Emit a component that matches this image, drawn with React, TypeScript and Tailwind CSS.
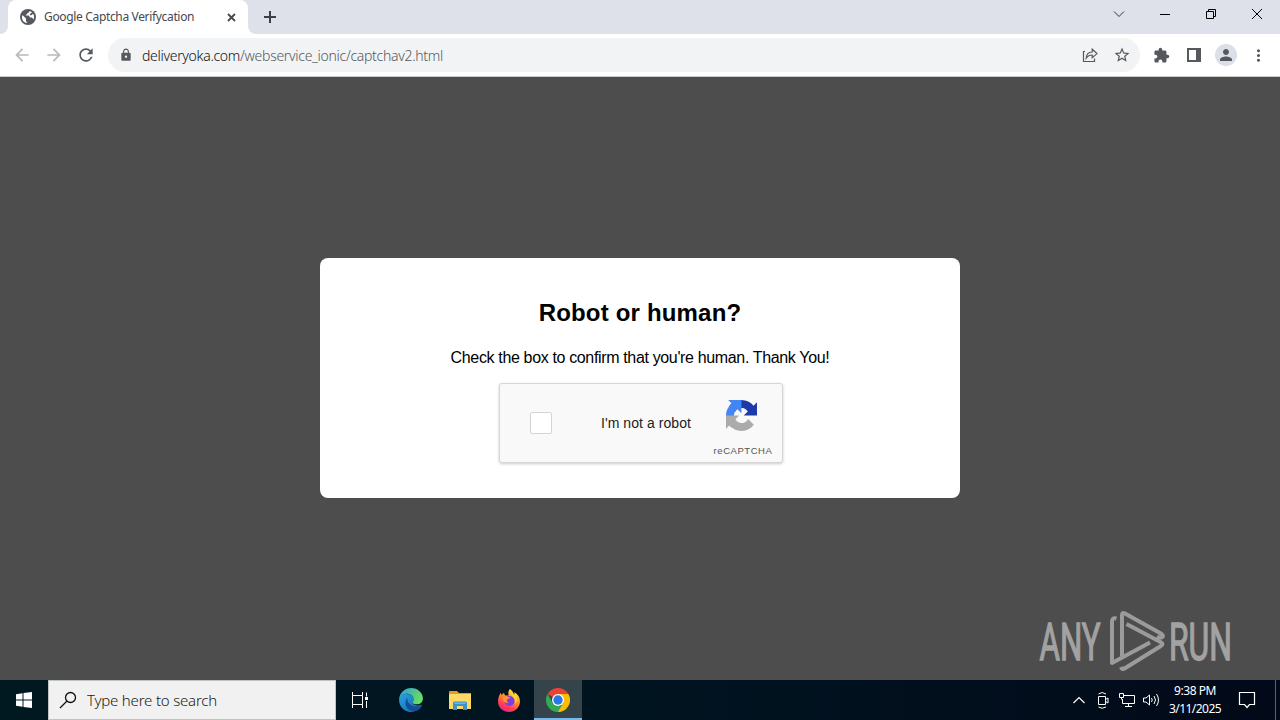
import React from 'react';
import {
  MdArrowBack,
  MdArrowForward,
  MdExtension,
  MdLock,
  MdMoreVert,
  MdPerson,
  MdPublic,
  MdRefresh,
  MdStarBorder,
} from 'react-icons/md';

const TabStrip: React.FC = () => (
  <div className="flex h-[34px] bg-[#dee1e9] text-[#202124]">
    <div className="w-2 bg-white">
      <div className="h-full rounded-br-lg bg-[#dee1e9]" />
    </div>
    <div className="flex h-full w-60 items-center rounded-t-lg bg-white pl-3 pr-2.5">
      <div className="flex size-4 items-center justify-center rounded-full bg-[#55595e]">
        <svg className="size-4" viewBox="0 0 16 16" fill="#fff">
          <path d="M3 6.500 6 9.500v2.500L7.500 14C4 14 1.800 11 2 8c0-.6.1-1 .3-1.500zM9.500 2c0 2-2 1.500-2.500 3L5.500 6.500H9l1 2h2l1.500 2c.8-2 .8-4-.3-5.800L11 6.500 9.500 5.500 12 3.200C11.300 2.600 10.400 2.200 9.500 2z" />
        </svg>
      </div>
      <span className="ml-2 w-[183px] whitespace-nowrap text-[12px] tracking-[-0.34px] text-[#45494d]">
        Google Captcha Verifycation
      </span>
      <svg className="size-[9px] shrink-0" viewBox="0 0 9 9" fill="none" stroke="#45494d" strokeWidth="1.800">
        <path d="m1 1 7 7M8 1 1 8" />
      </svg>
    </div>
    <div className="w-2 bg-white">
      <div className="h-full rounded-bl-lg bg-[#dee1e9]" />
    </div>
    <svg className="ml-[7px] mt-2.5 size-[14px]" viewBox="0 0 14 14" fill="none" stroke="#3c4043" strokeWidth="2">
      <path d="M7 1v12M1 7h12" />
    </svg>
    <div className="ml-auto flex">
      <svg className="h-[28px] w-[46px]" viewBox="0 0 46 28" fill="none" stroke="#303238">
        <path d="m18 11.500 5 5 5-5" />
      </svg>
      <svg className="h-[28px] w-[46px]" viewBox="0 0 46 28" fill="none" stroke="#000">
        <path d="M18 14.500h10" />
      </svg>
      <svg className="h-[28px] w-[46px]" viewBox="0 0 46 28" fill="none" stroke="#000">
        <path d="M18.500 11.500h7v7h-7zM20.500 11.500v-2h7v7h-2" />
      </svg>
      <svg className="h-[28px] w-[46px]" viewBox="0 0 46 28" fill="none" stroke="#000">
        <path d="m18 9 10 10M28 9 18 19" />
      </svg>
    </div>
  </div>
);

const Toolbar: React.FC = () => (
  <div className="flex h-[43px] items-center border-b border-[#c9c9c9] bg-white pl-3 pr-3 text-[#55595e]">
    <MdArrowBack className="size-5 text-[#b7b9bb]" />
    <MdArrowForward className="ml-3 size-5 text-[#b7b9bb]" />
    <MdRefresh className="ml-3 size-5" />
    <div className="ml-3 flex h-[34px] w-[1032px] items-center rounded-full bg-[#f1f3f5] pl-[11px] pr-[9px]">
      <MdLock className="size-3.5" />
      <span className="ml-[9px] whitespace-nowrap text-[14px] font-light tracking-[-0.3px] text-[#55595d]">
        <span className="text-[#101114]">deliveryoka.com</span>/webservice_ionic/captchav2.html
      </span>
      <svg className="ml-auto size-4" viewBox="0 0 16 16" fill="none" stroke="currentColor" strokeWidth="1.200">
        <path d="M3 4.500H1.500v10h11v-3" />
        <path d="M4.200 11.200c.2-4 2.300-6.100 6-6.200V2.200l4.800 4.400-4.800 4.200V8c-2.700 0-4.500.9-6 3.200Z" />
      </svg>
      <MdStarBorder className="ml-[15px] size-[18px]" />
    </div>
    <MdExtension className="ml-[13px] size-[17px]" />
    <svg className="ml-4 size-4" viewBox="0 0 16 16">
      <path fill="currentColor" fillRule="evenodd" d="M1 1h14v14H1zM3 3v10h7V3z" />
    </svg>
    <div className="ml-[13px] flex size-[22px] items-center justify-center rounded-full bg-[#dcdee8]">
      <MdPerson className="size-[18px]" />
    </div>
    <MdMoreVert className="ml-3 size-[19px]" />
  </div>
);

const RecaptchaLogo: React.FC = () => (
  <svg className="size-[31px]" viewBox="0 0 64 64">
    <path
      fill="#1c3aa9"
      d="M64 31.955l-.033-1.37V4.687l-7.16 7.16C50.948 4.674 42.033.093 32.05.093c-10.4 0-19.622 4.96-25.458 12.64l11.736 11.86a15.55 15.55 0 0 1 4.754-5.334c2.05-1.6 4.952-2.906 8.968-2.906.485 0 .86.057 1.135.163 4.976.393 9.288 3.14 11.828 7.124l-8.307 8.307L64 31.953"
    />
    <path
      fill="#4285f4"
      d="M31.862.094l-1.37.033H4.594l7.16 7.16C4.58 13.147 0 22.06 0 32.046c0 10.4 4.96 19.622 12.64 25.458L24.5 45.768a15.55 15.55 0 0 1-5.334-4.754c-1.6-2.05-2.906-4.952-2.906-8.968 0-.485.057-.86.163-1.135.393-4.976 3.14-9.288 7.124-11.828l8.307 8.307L31.86.095"
    />
    <path
      fill="#ababab"
      d="M.001 32.045l.033 1.37v25.898l7.16-7.16c5.86 7.173 14.774 11.754 24.76 11.754 10.4 0 19.622-4.96 25.458-12.64l-11.736-11.86a15.55 15.55 0 0 1-4.754 5.334c-2.05 1.6-4.952 2.906-8.968 2.906-.485 0-.86-.057-1.135-.163-4.976-.393-9.288-3.14-11.828-7.124l8.307-8.307c-10.522.04-22.4.066-27.295-.005"
    />
  </svg>
);

const CaptchaDialog: React.FC = () => (
  <div className="flex h-60 w-[640px] flex-col items-center rounded-lg bg-white pt-10 font-['Liberation_Sans',Arial,sans-serif] text-black">
    <h1 className="text-[24px] font-bold leading-[30px] tracking-[0.18px]">Robot or human?</h1>
    <p className="mt-[21px] text-[16px] leading-[18px] tracking-[-0.35px]">
      Check the box to confirm that you're human. Thank You!
    </p>
    <div className="ml-[2px] mt-4 flex h-[80px] w-[284px] rounded-[3px] border border-[#d6d6d6] bg-[#f9f9f9] shadow-[0_1px_3px_rgba(0,0,0,0.2)]">
      <button type="button" className="ml-[30px] mt-7 size-[22px] rounded-[2px] border border-[#d5d5d5] bg-white" />
      <span className="ml-[49px] w-[90px] self-center whitespace-nowrap pt-0.5 text-[14px] tracking-[0.06px] text-[#222]">
        I'm not a robot
      </span>
      <div className="ml-[22px] flex w-[60px] flex-col items-center pt-4">
        <div className="mr-1">
          <RecaptchaLogo />
        </div>
        <span className="mt-3 text-[9.5px] leading-4 tracking-[0.55px] text-[#555]">reCAPTCHA</span>
      </div>
    </div>
  </div>
);

const Watermark: React.FC = () => (
  <svg
    className="absolute bottom-2 right-12 h-[62px] w-[194px] font-['Roboto',sans-serif]"
    viewBox="0 0 194 62"
    fill="#a2a2a2"
  >
    <g stroke="#a2a2a2" strokeWidth="1.400">
      <text transform="translate(1.500 49.500) scale(.5 1)" fontSize="51" textLength="122" lengthAdjust="spacingAndGlyphs">
        ANY
      </text>
      <text transform="translate(131 49.500) scale(.5 1)" fontSize="51" textLength="126" lengthAdjust="spacingAndGlyphs">
        RUN
      </text>
    </g>
    <g fill="none" stroke="#9b9b9b" strokeWidth="4" strokeLinejoin="round">
      <path d="M78.500 8.500q-4.500-1.500-4.500 3.500V53l38-20.500" />
      <path d="M84 46V5q0-3 3-1.500l35 19.500q5 3 1.500 4.500-1.500.7-4.500-1" />
      <path d="m88.500 14 34 18q4 2 0 4.200L86.500 58.500q-2.500 1.500-3.500-1.500" />
    </g>
  </svg>
);

const EdgeIcon: React.FC = () => (
  <svg className="size-[26px]" viewBox="0 0 24 24">
    <defs>
      <linearGradient id="edgeTop" x1="0" y1="0" x2="1" y2=".4">
        <stop stopColor="#279de0" />
        <stop offset="1" stopColor="#68dc63" />
      </linearGradient>
      <linearGradient id="edgeBase" x1="0" y1="0" x2="1" y2="1">
        <stop stopColor="#28a1df" />
        <stop offset="1" stopColor="#1267b4" />
      </linearGradient>
    </defs>
    <path fill="url(#edgeBase)" d="M1 12C1 7 5 6.500 8 6.500c4.500 0 6.500 3 6.500 5.500 0 1-1 1.500-1 2.500 0 1.500 2.500 2.500 5 2.500 1.500 0 3-.6 3.500-.6C20.500 20 17 23 12 23 6 23 1 18.500 1 12Z" />
    <path fill="#154f93" d="M8.700 10C6.300 12 6.200 17 9 20c2.600 2.800 7.200 3 11 .2 1.200-1 2-2.500 2-3.700-2 1.500-5 2-7.500 1.200C10.500 16.300 8 13.500 8.700 10Z" />
    <path fill="url(#edgeTop)" d="M1.200 10.500C1.800 5 6.500 1 12 1c6.200 0 11 4.500 11 9.700 0 3.600-2.700 5.300-5.300 5.300-2.800 0-4.300-.8-4.300-1.700 0-.6 1-1.200 1-2.600C14.400 8.500 11.300 6.300 8 6.300c-3 0-5.500 1.500-6.800 4.200Z" />
  </svg>
);

const FolderIcon: React.FC = () => (
  <svg className="h-[19px] w-[22px]" viewBox="0 0 22 19">
    <path fill="#e89a20" d="M0 1q0-1 1-1h7l2 2h12v5H0z" />
    <path fill="#ffd866" d="M0 3h22v15H0z" />
    <path fill="#3c93cc" d="M4 19v-7q0-1.500 1.500-1.500h11q1.500 0 1.500 1.500v7h-4v-4H8v4z" />
    <path fill="#68b7e4" d="M5.500 11.500h11V13h-11z" />
  </svg>
);

const FirefoxIcon: React.FC = () => (
  <svg className="size-6" viewBox="0 0 24 24">
    <defs>
      <linearGradient id="fox" x1=".8" y1="0" x2=".3" y2="1">
        <stop stopColor="#fff44f" />
        <stop offset=".4" stopColor="#ff9a27" />
        <stop offset=".75" stopColor="#ff4055" />
        <stop offset="1" stopColor="#ed1d83" />
      </linearGradient>
    </defs>
    <path fill="url(#fox)" d="M13 1c2 1.500 3.500 3.500 4 5.500.5-.6.600-1.500.4-2.400C21 6.500 23 9.500 23 13.500 23 19.300 18 24 12 24S1 19.500 1 13.500C1 10 2 7 4 4.500c0 1 .2 1.700.6 2.500L7 4.800c.1 1.200.7 2 1.600 2.700 1.200-.2 2-.1 3 .3C11 5 11.300 2.500 13 1Z" />
    <circle cx="12.500" cy="13" r="5" fill="#7b3ee6" />
    <path fill="#ff942c" d="M5.500 9.500c2.500-1.700 5.700-1.200 8 .5-1.200.8-2.500.7-3.300 1.600-1 1.100.2 2.600 1.500 2.600-2 1.500-5 1-6.200-4.700Z" />
    <path fill="#ffd43b" d="M14 3c-.8 2.500.8 4.500 3 7 1.500 1.800 1.600 4 .7 6 3-2.600 3.600-6 1.300-9l-1.300-1-.3 2.500C16.800 6.500 15.500 4.500 14 3Z" />
  </svg>
);

const ChromeIcon: React.FC = () => (
  <svg className="size-6" viewBox="0 0 24 24">
    <path fill="#ea4335" d="M12 12 1.600 6A12 12 0 0 1 22.400 6H12z" />
    <path fill="#fbbc05" d="M12 6h10.400A12 12 0 0 1 12 24l5.200-9L12 12z" />
    <path fill="#34a853" d="M1.600 6 6.800 15 12 18h3.464L12 24A12 12 0 0 1 1.600 6z" />
    <path fill="#fbbc05" d="m17.200 15-5.200 9 1-.1L18 14z" />
    <circle cx="12" cy="12" r="6" fill="#fff" />
    <circle cx="12" cy="12" r="4.700" fill="#2878e8" />
  </svg>
);

const Taskbar: React.FC = () => (
  <div className="flex h-10 bg-linear-to-r from-[#001820] via-[#001420] to-[#020919] text-white">
    <div className="flex w-12 items-center justify-center">
      <svg className="size-4" viewBox="0 0 16 16" fill="#fff">
        <path d="M0 2.200 6.500 1.300v6.200H0zM7.500 1.100 16 0v7.500H7.500zM0 8.500h6.500v6.200L0 13.800zM7.500 8.500H16V16l-8.500-1.100z" />
      </svg>
    </div>
    <div className="flex w-72 items-center border border-[#bfc4c6] bg-[#f1f1f1] pl-[10px] text-[#1a1a1a]">
      <svg className="size-[18px]" viewBox="0 0 18 18" fill="none" stroke="#111" strokeWidth="1.300">
        <circle cx="11.500" cy="6.500" r="5" />
        <path d="M8 10 1 17" />
      </svg>
      <span className="ml-[10px] whitespace-nowrap text-[15px] font-light tracking-[-0.2px]">
        Type here to search
      </span>
    </div>
    <div className="flex w-12 items-center justify-center">
      <svg className="size-[18px]" viewBox="0 0 18 18" fill="none" stroke="#fff">
        <path d="M1.500 1v3.500h10V1M1.500 17v-3.500h10V17M1.500 4.500v9M11.500 4.500v9M15.500 1.500v4M15.500 10v7" />
        <path fill="#fff" stroke="none" d="M14 6h3v3h-3z" />
      </svg>
    </div>
    <div className="flex w-[54px] items-center justify-center">
      <EdgeIcon />
    </div>
    <div className="flex w-11 items-center justify-center">
      <FolderIcon />
    </div>
    <div className="flex w-[52px] items-center justify-center pl-0.5">
      <FirefoxIcon />
    </div>
    <div className="flex w-12 items-center justify-center border-b-2 border-[#76b9ed] bg-[#35434a] pt-0.5">
      <ChromeIcon />
    </div>
    <div className="ml-auto flex items-center">
      <svg className="h-5 w-3" viewBox="0 0 12 20" fill="none" stroke="#fff" strokeWidth="1.200">
        <path d="m.5 13 5.500-5.500 5.500 5.500" />
      </svg>
      <svg className="ml-3 h-5 w-3" viewBox="0 0 12 20" fill="none" stroke="#fff">
        <path d="M1.500 6.500h7v8h-7zM8.500 9.500l2.500-1.500v5l-2.500-1.500M1.500 4q3.500-3 7.500 0M1.500 17q3.500 2.500 7.500 0" />
      </svg>
      <svg className="ml-2.5 h-5 w-4" viewBox="0 0 16 20" fill="none" stroke="#fff">
        <path d="M5 5.500h10.500v8h-12V9M9.500 13.500v3M6 16.500h7M.5 3.500h4v4h-4zM2.500 7.500v2" />
      </svg>
      <svg className="ml-[7px] h-5 w-[18px]" viewBox="0 0 18 20" fill="none" stroke="#fff">
        <path d="M1.500 8h2.500l3.500-3v10L4 12H1.500zM9.500 8q1.500 2 0 4M12 6q3 4 0 8M14.500 4q4 6 0 12" />
      </svg>
      <div className="ml-2 flex w-[54px] flex-col items-center whitespace-nowrap text-[12px] leading-[18px]">
        <span className="tracking-[-0.45px]">9:38 PM</span>
        <span className="tracking-[-0.55px]">3/11/2025</span>
      </div>
      <svg className="ml-4 mr-[19px] h-[18px] w-[18px]" viewBox="0 0 18 18" fill="none" stroke="#fff" strokeWidth="1.200">
        <path d="M1.500 1.500h15v12h-5L9 16.500l-2.500-3h-5z" />
      </svg>
      <div className="mr-1 h-full w-px bg-[#59616b]" />
    </div>
  </div>
);

export default function App() {
  return (
    <div className="flex h-[720px] w-[1280px] flex-col overflow-hidden font-['Noto_Sans',sans-serif]">
      <TabStrip />
      <Toolbar />
      <main className="relative flex flex-1 items-center justify-center bg-[#4d4d4d] pb-0.5">
        <CaptchaDialog />
        <Watermark />
      </main>
      <Taskbar />
    </div>
  );
}
